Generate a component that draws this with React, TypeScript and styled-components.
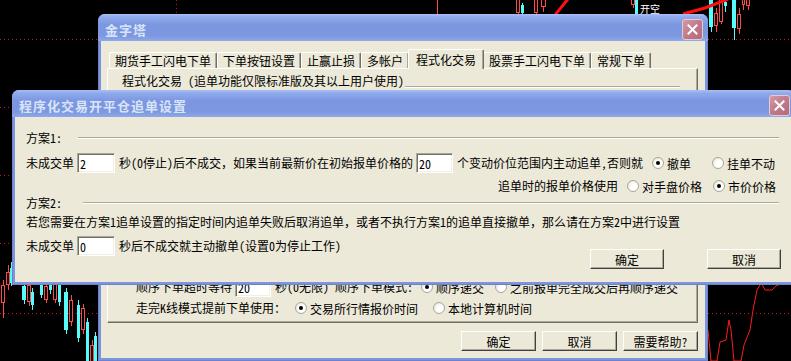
import React from 'react'
import styled, { createGlobalStyle } from 'styled-components'

const FONT = `"Noto Sans Mono CJK SC", "Noto Sans CJK SC", "Liberation Sans", sans-serif`

const GlobalStyle = createGlobalStyle`
  html, body {
    margin: 0;
    padding: 0;
    background: #000;
  }
  body {
    font-family: ${FONT};
    font-size: 12px;
    color: #000;
  }
`

const Screen = styled.div`
  position: relative;
  width: 791px;
  height: 361px;
  overflow: hidden;
  background: #000;
`

const Chart = styled.svg`
  position: absolute;
  left: 0;
  top: 0;
`

/* ---------- window chrome ---------- */

const Window = styled.div<{ $x: number; $y: number; $w: number; $h: number }>`
  position: absolute;
  left: ${p => p.$x}px;
  top: ${p => p.$y}px;
  width: ${p => p.$w}px;
  height: ${p => p.$h}px;
  box-sizing: border-box;
  display: flex;
  flex-direction: column;
  background: #7d95dc;
  border-radius: 7px 7px 0 0;
  box-shadow: inset 1px 0 #6b82cf, inset -1px 0 #6b82cf, inset 0 -1px #6b82cf;
`

const TitleBar = styled.div`
  flex: none;
  height: 27px;
  box-sizing: border-box;
  display: flex;
  align-items: center;
  padding: 3px 5px 0 7px;
  border-radius: 7px 7px 0 0;
  background: linear-gradient(
    to bottom,
    #a9bff3 0%,
    #8fa9eb 12%,
    #7b97e0 40%,
    #7d98e0 80%,
    #8ea8e9 100%
  );
`

const Title = styled.div`
  font-family: ${FONT};
  font-size: 13px;
  font-weight: 700;
  letter-spacing: 1px;
  color: #d8e4f8;
  white-space: nowrap;
`

const CloseButton = styled.div`
  margin-left: auto;
  width: 21px;
  height: 21px;
  box-sizing: border-box;
  border: 1px solid #e4cbd3;
  border-radius: 3px;
  background: linear-gradient(135deg, #d49aa6 0%, #c07a89 50%, #b06a7a 100%);
  display: flex;
  align-items: center;
  justify-content: center;
`

const Body = styled.div<{ $pad: string }>`
  flex: 1;
  min-height: 0;
  margin: 0 3px 3px;
  padding: ${p => p.$pad};
  background: #ece9d8;
  display: flex;
  flex-direction: column;
`

/* ---------- controls ---------- */

const Row = styled.div<{ $mt?: number; $h?: number; $pl?: number }>`
  display: flex;
  align-items: center;
  flex: none;
  height: ${p => p.$h ?? 16}px;
  margin-top: ${p => p.$mt ?? 0}px;
  padding-left: ${p => p.$pl ?? 0}px;
  white-space: nowrap;
`

const Text = styled.span<{ $w?: number }>`
  flex: none;
  width: ${p => (p.$w ? `${p.$w}px` : 'auto')};
  line-height: 16px;
`

const Field = styled.input<{ $w: number }>`
  flex: none;
  width: ${p => p.$w}px;
  height: 20px;
  margin: 0 4px 0 3px;
  padding: 0 2px;
  box-sizing: border-box;
  font-family: ${FONT};
  font-size: 12px;
  color: #000;
  background: #fff;
  border: 1px solid;
  border-color: #aca899 #fff #fff #aca899;
  box-shadow: inset 1px 1px #716f64, inset -1px -1px #f1efe2;
  outline: none;
`

const Option = styled.span<{ $w?: number; $ml?: number }>`
  flex: none;
  display: inline-flex;
  align-items: center;
  gap: 3px;
  width: ${p => (p.$w ? `${p.$w}px` : 'auto')};
  margin-left: ${p => (p.$ml !== undefined ? `${p.$ml}px` : '0')};
`

const Radio = styled.span<{ $on?: boolean }>`
  position: relative;
  flex: none;
  width: 12px;
  height: 12px;
  box-sizing: border-box;
  border-radius: 50%;
  border: 1px solid #a9a796;
  background: radial-gradient(circle at 65% 65%, #ffffff 35%, #e3e0d2 100%);
  &::after {
    content: '';
    display: ${p => (p.$on ? 'block' : 'none')};
    position: absolute;
    left: 3px;
    top: 3px;
    width: 4px;
    height: 4px;
    border-radius: 50%;
    background: #000;
  }
`

const Rule = styled.div<{ $ml?: number; $w?: number }>`
  flex: ${p => (p.$w ? 'none' : '1')};
  width: ${p => (p.$w ? `${p.$w}px` : 'auto')};
  margin-left: ${p => (p.$ml !== undefined ? `${p.$ml}px` : 'auto')};
  height: 0;
  border-top: 1px solid #aca899;
  border-bottom: 1px solid #fff;
`

const GroupEdge = styled(Rule)`
  align-self: flex-end;
  margin-right: 17px;
`

const Button = styled.button<{ $w: number }>`
  flex: none;
  width: ${p => p.$w}px;
  height: 20px;
  padding: 0;
  box-sizing: border-box;
  font-family: ${FONT};
  font-size: 12px;
  color: #000;
  background: #ece9d8;
  border-style: solid;
  border-width: 1px;
  border-color: #fff #404040 #404040 #fff;
  box-shadow: inset -1px -1px #aca899;
  display: flex;
  align-items: center;
  justify-content: center;
`

const ButtonBar = styled.div<{ $gap: number; $mt?: number; $mr?: number }>`
  display: flex;
  justify-content: flex-end;
  gap: ${p => p.$gap}px;
  margin-top: ${p => p.$mt ?? 0}px;
  margin-right: ${p => p.$mr ?? 0}px;
`

const Footer = styled.div`
  display: flex;
  align-items: flex-start;
  justify-content: space-between;
  margin-top: 6px;
`

const PushRight = styled.span`
  margin-left: auto;
`

/* ---------- tabs ---------- */

const TabStrip = styled.div`
  display: flex;
  align-items: flex-end;
  height: 19px;
  margin-left: 2px;
  position: relative;
  z-index: 1;
`

const Tab = styled.div<{ $active?: boolean }>`
  height: ${p => (p.$active ? 20 : 16)}px;
  padding: 0 ${p => (p.$active ? 7 : 5)}px;
  margin: 0 ${p => (p.$active ? -1 : 0)}px ${p => (p.$active ? -1 : 0)}px;
  box-sizing: border-box;
  display: flex;
  align-items: center;
  justify-content: center;
  white-space: nowrap;
  background: #ece9d8;
  border-top: 1px solid #fff;
  border-left: 1px solid #fff;
  border-right: 1px solid #716f64;
  box-shadow: inset -1px 0 #aca899;
  border-radius: 2px 2px 0 0;
  position: relative;
  z-index: ${p => (p.$active ? 2 : 1)};
`

const Panel = styled.div`
  flex: 1;
  display: flex;
  flex-direction: column;
  border-top: 1px solid #fff;
  border-left: 1px solid #fff;
  border-right: 1px solid #716f64;
  border-bottom: 1px solid #716f64;
  box-shadow: inset -1px -1px #aca899;
  padding-bottom: 6px;
`

const Spacer = styled.div`
  flex: 1;
`

/* ---------- chart data ---------- */

// x, width, bodyTop, bodyBottom, wickTop, wickBottom, colour
type Candle = [number, number, number, number, number, number, 'r' | 'c']

const candles: Candle[] = [
  [516, 4, -2, 13, -5, 14, 'r'],
  [521, 3, 5, 13, 3, 15, 'c'],
  [534, 4, -2, 13, -5, 14, 'r'],
  [541, 5, -2, 7, -5, 12, 'r'],
  [631, 4, -2, 5, -5, 8, 'r'],
  [635, 3, -2, 14, -5, 14, 'c'],
  [709, 4, -2, 27, -5, 32, 'c'],
  [714, 4, 13, 26, 8, 32, 'r'],
  [719, 4, -2, 22, -5, 24, 'r'],
  [724, 3, 2, 6, 0, 12, 'c'],
  [732, 4, -2, 28, -5, 40, 'c'],
  [737, 4, 14, 29, 8, 34, 'r'],
  [742, 3, -2, 5, -5, 10, 'r'],
  [746, 4, -2, 6, -5, 10, 'r'],

  [1, 4, 285, 303, 280, 318, 'r'],
  [6, 4, 272, 285, 265, 290, 'r'],
  [10, 3, 268, 283, 262, 286, 'c'],
  [22, 4, 286, 300, 282, 304, 'c'],
  [27, 4, 285, 302, 281, 306, 'r'],
  [31, 3, 292, 305, 288, 310, 'c'],
  [40, 3, 284, 295, 280, 298, 'c'],
  [44, 4, 286, 300, 282, 303, 'r'],
  [49, 3, 281, 290, 279, 294, 'c'],
  [53, 4, 284, 300, 280, 303, 'r'],
  [58, 3, 285, 302, 283, 306, 'c'],
  [64, 4, 292, 330, 288, 334, 'c'],
  [69, 4, 300, 322, 295, 326, 'r'],
  [77, 3, 305, 338, 300, 342, 'c'],
  [81, 4, 308, 330, 304, 334, 'r'],
  [86, 3, 322, 362, 318, 365, 'c'],
  [90, 4, 345, 362, 340, 365, 'r'],
  [94, 3, 336, 362, 332, 365, 'c'],
]

const RED = '#ff4848'
const CYAN = '#54fcfc'

const PriceChart: React.FC = () => (
  <Chart width={791} height={361} viewBox="0 0 791 361">
    {[39, 107, 175, 243, 313].map(y => (
      <line key={y} x1={0} y1={y + 0.5} x2={791} y2={y + 0.5} stroke="#c81818" strokeDasharray="1 3" />
    ))}
    <line x1={176.5} y1={0} x2={176.5} y2={14} stroke="#c81818" strokeDasharray="1 3" />
    <line x1={437.5} y1={0} x2={437.5} y2={14} stroke={RED} />

    {candles.map(([x, w, bt, bb, wt, wb, c], i) => {
      const cx = x + Math.floor(w / 2) + 0.5
      if (c === 'c') {
        return (
          <g key={i}>
            <line x1={cx} y1={wt} x2={cx} y2={wb} stroke={CYAN} />
            <rect x={x} y={bt} width={w} height={bb - bt} fill={CYAN} />
          </g>
        )
      }
      return (
        <g key={i}>
          <line x1={cx} y1={wt} x2={cx} y2={bt} stroke={RED} />
          <line x1={cx} y1={bb} x2={cx} y2={wb} stroke={RED} />
          <rect x={x + 0.5} y={bt + 0.5} width={w - 1} height={bb - bt - 1} fill="#000" stroke={RED} />
        </g>
      )
    })}

    <polyline points="555,15 568,-1" fill="none" stroke="#ff1010" strokeWidth={3} />
    <polyline points="683,14 705,8 728,-1" fill="none" stroke="#ff1010" strokeWidth={3} />
    <text x={640} y={13} fill="#fff" fontSize={10} fontFamily={FONT}>开空</text>

    <polyline
      points="708,330 711,361 717,361 720,342 726,340 729,320 731,330 734,361 741,361 744,345 750,330 753,310 757,290 760,285 762,284 765,290 772,290 776,286 780,284 791,283"
      fill="none"
      stroke="#ff1a1a"
      strokeWidth={1}
    />
  </Chart>
)

const CloseIcon: React.FC = () => (
  <svg width={11} height={11} viewBox="0 0 11 11">
    <path d="M1.5 1.5 L9.5 9.5 M9.5 1.5 L1.5 9.5" stroke="#fff" strokeWidth={2} strokeLinecap="square" />
  </svg>
)

const tabs = ['期货手工闪电下单', '下单按钮设置', '止赢止损', '多帐户', '程式化交易', '股票手工闪电下单', '常规下单']

const App: React.FC = () => {
  return (
    <Screen>
      <GlobalStyle />
      <PriceChart />

      {/* main window behind */}
      <Window $x={98} $y={14} $w={610} $h={347}>
        <TitleBar>
          <Title>金字塔</Title>
          <CloseButton>
            <CloseIcon />
          </CloseButton>
        </TitleBar>
        <Body $pad="8px 7px 7px 6px">
          <TabStrip>
            {tabs.map((t, i) => (
              <Tab key={t} $active={i === 4}>
                {t}
              </Tab>
            ))}
          </TabStrip>
          <Panel>
            <Row $mt={5} $h={14} $pl={14}>
              <Text>程式化交易 (追单功能仅限标准版及其以上用户使用)</Text>
              <GroupEdge $w={275} />
            </Row>
            <Spacer />
            <Row $h={20} $pl={28}>
              <Text>顺序下单超时等待</Text>
              <Field $w={36} readOnly value="20" />
              <Text>秒(0无限) 顺序下单模式:</Text>
              <Option $w={74} $ml={8}>
                <Radio $on />
                顺序递交
              </Option>
              <Option>
                <Radio />
                之前报单完全成交后再顺序递交
              </Option>
            </Row>
            <Row $mt={3} $pl={28}>
              <Text $w={159}>走完K线模式提前下单使用：</Text>
              <Option $w={138}>
                <Radio $on />
                交易所行情报价时间
              </Option>
              <Option>
                <Radio />
                本地计算机时间
              </Option>
            </Row>
          </Panel>
          <ButtonBar $gap={6} $mt={8}>
            <Button $w={75}>确定</Button>
            <Button $w={75}>取消</Button>
            <Button $w={75}>需要帮助?</Button>
          </ButtonBar>
        </Body>
      </Window>

      {/* chase-order settings dialog */}
      <Window $x={12} $y={90} $w={783} $h={195}>
        <TitleBar>
          <Title>程序化交易开平仓追单设置</Title>
          <CloseButton>
            <CloseIcon />
          </CloseButton>
        </TitleBar>
        <Body $pad="0 13px 0 11px">
          <Row $mt={13}>
            <Text>方案1:</Text>
            <Rule $ml={16} />
          </Row>
          <Row $mt={7} $h={20}>
            <Text>未成交单</Text>
            <Field $w={38} readOnly value="2" />
            <Text>秒(0停止)后不成交，如果当前最新价在初始报单价格的</Text>
            <Field $w={37} readOnly value="20" />
            <Text>个变动价位范围内主动追单,否则就</Text>
            <PushRight />
            <Option $w={60}>
              <Radio $on />
              撤单
            </Option>
            <Option $w={67}>
              <Radio />
              挂单不动
            </Option>
          </Row>
          <Row $mt={5}>
            <PushRight />
            <Text>追单时的报单价格使用</Text>
            <Option $w={86} $ml={9}>
              <Radio />
              对手盘价格
            </Option>
            <Option $w={66}>
              <Radio $on />
              市价价格
            </Option>
          </Row>
          <Row $mt={1}>
            <Text>方案2:</Text>
            <Rule $ml={21} />
          </Row>
          <Row $mt={3}>
            <Text>若您需要在方案1追单设置的指定时间内追单失败后取消追单，或者不执行方案1的追单直接撤单，那么请在方案2中进行设置</Text>
          </Row>
          <Footer>
            <Row $h={20}>
              <Text>未成交单</Text>
              <Field $w={38} readOnly value="0" />
              <Text>秒后不成交就主动撤单(设置0为停止工作)</Text>
            </Row>
            <ButtonBar $gap={43} $mt={13} $mr={-2}>
              <Button $w={74}>确定</Button>
              <Button $w={74}>取消</Button>
            </ButtonBar>
          </Footer>
        </Body>
      </Window>
    </Screen>
  )
}

export default App
